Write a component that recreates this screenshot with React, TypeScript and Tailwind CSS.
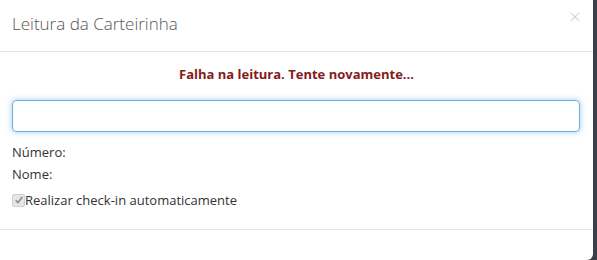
import React from 'react';

const App: React.FC = () => {
  return (
    <div className="flex h-[260px] w-[597px] bg-[#3b4048] font-['Open_Sans',sans-serif]">
      <div className="flex h-[260px] w-[593px] flex-col rounded-br-[6px] bg-white">
        {/* Header */}
        <div className="relative flex h-[52px] items-center border-b border-[#e5e5e5] px-[12px] pb-[3px]">
          <h4 className="text-[17px] font-light leading-[24px] text-[#555]">Leitura da Carteirinha</h4>
          <span className="absolute right-[12px] top-[4px] text-[21px] font-light leading-[24px] text-[#cfcfcf]">
            ×
          </span>
        </div>

        {/* Body */}
        <div className="flex flex-col px-[12px] pt-[13px]">
          <p className="text-center text-[13px] font-bold leading-[18px] text-[#841b1b]">
            Falha na leitura. Tente novamente...
          </p>
          <input
            type="text"
            className="mt-[17px] h-[32px] w-[568px] rounded-[4px] border border-[#66afe9] shadow-[0_0_6px_rgba(102,175,233,0.6)] outline-none"
          />
          <div className="mt-[11px] text-[13px] leading-[18px] text-[#333]">Número:</div>
          <div className="mt-[4px] text-[13px] leading-[18px] text-[#333]">Nome:</div>
          <label className="mt-[8px] flex items-center text-[13px] leading-[18px] text-[#333]">
            <span className="flex h-[13px] w-[13px] items-center justify-center rounded-[2px] border border-[#cfcfcf] bg-[#e6e6e6]">
              <svg viewBox="0 0 12 12" className="h-[10px] w-[10px]">
                <path d="M2 6.5 L4.8 9 L10 2.5" fill="none" stroke="#8d8d8d" strokeWidth="2" />
              </svg>
            </span>
            Realizar check-in automaticamente
          </label>
        </div>

        {/* Footer */}
        <div className="mt-[20px] border-t border-[#e5e5e5]" />
      </div>
    </div>
  );
};

export default App;
